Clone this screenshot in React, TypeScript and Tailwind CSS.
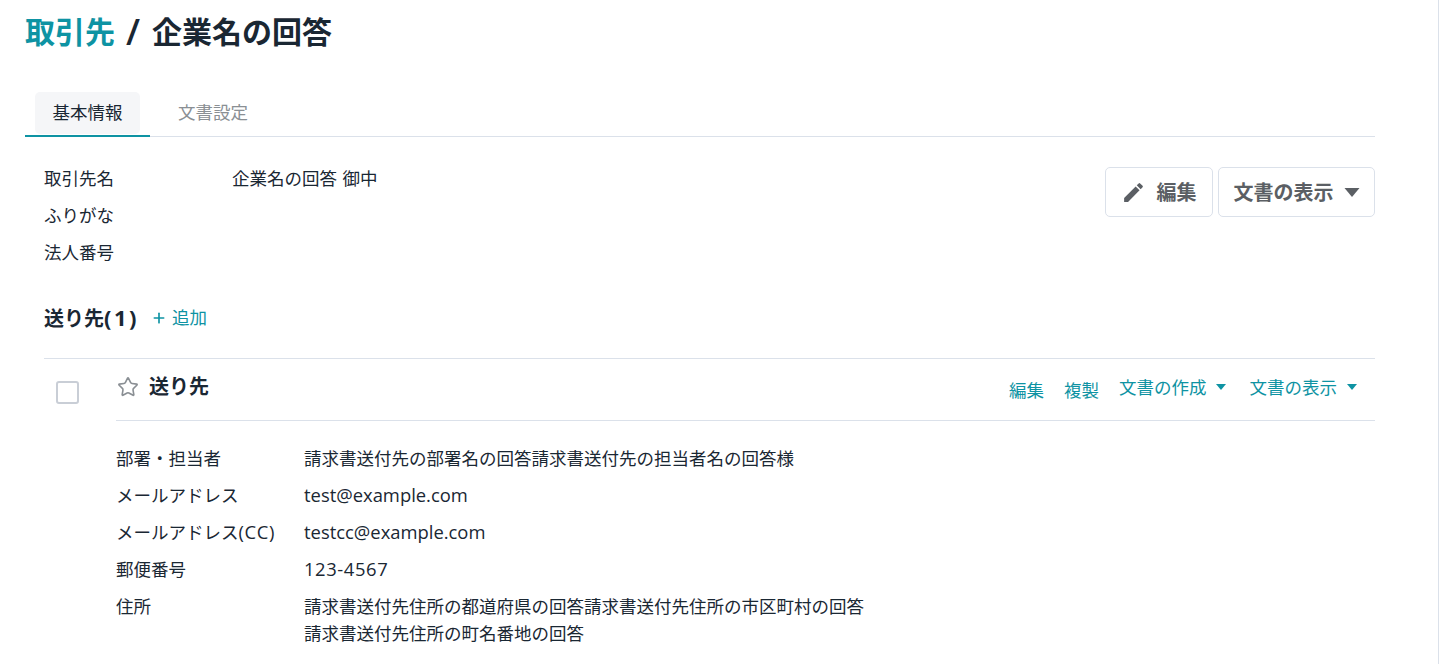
import { Plus, Star } from "lucide-react";

function Caret({ className }: { className: string }) {
  return (
    <svg viewBox="0 0 10 6" className={className}>
      <path d="M0 0h10L5 6z" fill="currentColor" />
    </svg>
  );
}

const details = [
  { label: "部署・担当者", value: ["請求書送付先の部署名の回答請求書送付先の担当者名の回答様"], cls: "" },
  { label: "メールアドレス", value: ["test@example.com"], cls: "text-[18.4px] -mt-px" },
  { label: "メールアドレス", suffix: "(CC)", value: ["testcc@example.com"], cls: "text-[18.4px] -mt-px" },
  { label: "郵便番号", value: ["123-4567"], cls: "text-[18.4px] tracking-[0.6px] -mt-px" },
  { label: "住所", value: ["請求書送付先住所の都道府県の回答請求書送付先住所の市区町村の回答", "請求書送付先住所の町名番地の回答"], cls: "" },
];

export default function App() {
  return (
    <div className="h-[664px] overflow-hidden bg-white text-[#1a2733] font-['Open_Sans','Noto_Sans_CJK_JP',sans-serif]">
      <main className="w-[1439px] h-full border-r border-[#dbe1ea] pl-[25px] pr-[63px]">
        <h1 className="h-[92px] pt-[11px] text-[30px] leading-[42px] font-bold flex">
          <a className="text-[#0e93a3]">取引先</a>
          <span className="ml-[11px] mr-[12px] text-[36px] font-semibold">/</span>
          <span>企業名の回答</span>
        </h1>

        <div className="flex h-[45px] border-b border-[#dbe1ea] text-[17.5px] leading-[24px]">
          <div className="w-[125px] h-[45px] border-b-2 border-[#0e93a3] px-[10px]">
            <div className="h-[42px] pb-[2px] bg-[#f5f6f8] rounded-[5px] flex items-center justify-center">基本情報</div>
          </div>
          <div className="h-[42px] pb-[2px] flex items-center ml-[28px] text-[#8a8f94]">文書設定</div>
        </div>

        <section className="pl-[19px] pt-[30px] flex justify-between text-[17.5px] leading-[37px]">
          <div className="-mt-[5px] -translate-y-[2px]">
            <div className="flex h-[37px]"><span className="w-[188px]">取引先名</span><span className="[word-spacing:1px]">企業名の回答 御中</span></div>
            <div className="h-[37px]">ふりがな</div>
            <div className="h-[37px]">法人番号</div>
          </div>
          <div className="flex gap-[5px] text-[#5b5f64] text-[20px] font-bold">
            <button className="w-[108px] h-[50px] pr-[1px] border border-[#dbe1ea] rounded-[5px] flex items-center justify-center gap-[11px]">
              <svg viewBox="0 0 24 24" className="w-[25px] h-[25px]">
                <path fill="currentColor" d="M3 17.25V21h3.75L17.81 9.94l-3.75-3.75L3 17.25zM20.71 7.04a1 1 0 0 0 0-1.41l-2.34-2.34a1 1 0 0 0-1.41 0l-1.83 1.83 3.75 3.75 1.83-1.83z" />
              </svg>
              編集
            </button>
            <button className="w-[157px] h-[50px] border border-[#dbe1ea] rounded-[5px] flex items-center justify-center gap-[10px]">
              文書の表示
              <Caret className="w-[16px] h-[9px]" />
            </button>
          </div>
        </section>

        <div className="pl-[19px] mt-[26px] flex items-center h-[37px] text-[20px]">
          <span className="font-bold">送り先<span className="text-[22px] tracking-[2.5px]">(1)</span></span>
          <a className="ml-[12px] flex items-center text-[#0e93a3] text-[17.5px]">
            <Plus className="w-[16px] h-[16px] mr-[5px]" strokeWidth={2.5} />追加
          </a>
        </div>

        <div className="ml-[19px] mt-[22px] border-t border-[#dbe1ea] flex">
          <div className="w-[72px] pl-[12px] pt-[22px]">
            <div className="w-[23px] h-[23px] border-2 border-[#c9ced6] rounded-[3px]" />
          </div>
          <div className="flex-1">
            <div className="h-[62px] border-b border-[#dbe1ea] flex justify-between items-center pb-[5px]">
              <div className="flex items-center font-bold text-[20px]">
                <Star className="w-[22px] h-[22px] text-[#8a8f94] ml-[1px] mr-[10px]" strokeWidth={1.75} />
                送り先
              </div>
              <div className="flex items-center text-[#0e93a3] text-[17.5px] pr-[17px]">
                <a className="mt-[6px]">編集</a>
                <a className="ml-[20px] mt-[6px]">複製</a>
                <a className="ml-[20px] flex items-center gap-[8px]">文書の作成<Caret className="w-[12px] h-[6px]" /></a>
                <a className="ml-[23px] flex items-center gap-[9px]">文書の表示<Caret className="w-[12px] h-[6px]" /></a>
              </div>
            </div>
            <div className="pt-[19px] text-[17.5px]">
              {details.map((d) => (
                <div key={d.label + (d.suffix ?? "")} className="flex h-[37px]">
                  <span className="w-[188px] h-[37px] leading-[37px]">
                    {d.label}
                    {d.suffix && <span className="text-[18.4px] tracking-[0.6px] leading-none">{d.suffix}</span>}
                  </span>
                  <div className={`py-[5px] leading-[27px] ${d.cls}`}>
                    {d.value.map((v) => <div key={v}>{v}</div>)}
                  </div>
                </div>
              ))}
            </div>
          </div>
        </div>
      </main>
    </div>
  );
}
